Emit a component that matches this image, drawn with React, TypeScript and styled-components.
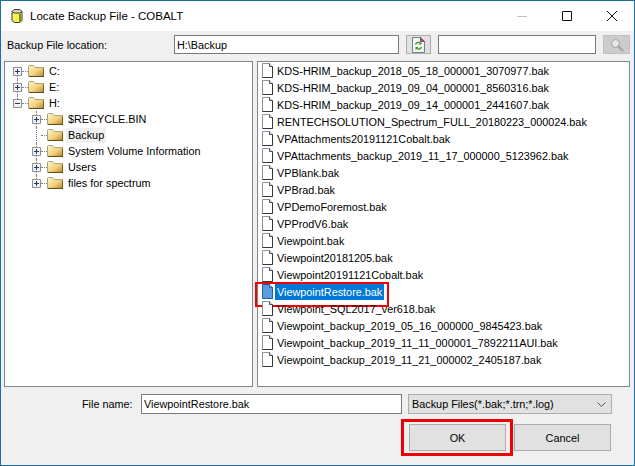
import styled, { createGlobalStyle } from 'styled-components';

const GlobalStyle = createGlobalStyle`
  html, body {
    margin: 0;
    padding: 0;
    background: #f0f0f0;
  }
  * {
    box-sizing: border-box;
  }
`;

type Line = 'down' | 'through' | 'up';

type TreeItem = {
  label: string;
  depth: number;
  box?: 'plus' | 'minus';
  line: Line;
  current?: boolean;
};

const treeItems: TreeItem[] = [
  { label: 'C:', depth: 0, box: 'plus', line: 'down' },
  { label: 'E:', depth: 0, box: 'plus', line: 'through' },
  { label: 'H:', depth: 0, box: 'minus', line: 'up' },
  { label: '$RECYCLE.BIN', depth: 1, box: 'plus', line: 'through' },
  { label: 'Backup', depth: 1, line: 'through', current: true },
  { label: 'System Volume Information', depth: 1, box: 'plus', line: 'through' },
  { label: 'Users', depth: 1, box: 'plus', line: 'through' },
  { label: 'files for spectrum', depth: 1, box: 'plus', line: 'up' },
];

const files = [
  'KDS-HRIM_backup_2018_05_18_000001_3070977.bak',
  'KDS-HRIM_backup_2019_09_04_000001_8560316.bak',
  'KDS-HRIM_backup_2019_09_14_000001_2441607.bak',
  'RENTECHSOLUTION_Spectrum_FULL_20180223_000024.bak',
  'VPAttachments20191121Cobalt.bak',
  'VPAttachments_backup_2019_11_17_000000_5123962.bak',
  'VPBlank.bak',
  'VPBrad.bak',
  'VPDemoForemost.bak',
  'VPProdV6.bak',
  'Viewpoint.bak',
  'Viewpoint20181205.bak',
  'Viewpoint20191121Cobalt.bak',
  'ViewpointRestore.bak',
  'Viewpoint_SQL2017_ver618.bak',
  'Viewpoint_backup_2019_05_16_000000_9845423.bak',
  'Viewpoint_backup_2019_11_11_000001_7892211AUI.bak',
  'Viewpoint_backup_2019_11_21_000002_2405187.bak',
];

const DatabaseIcon = () => (
  <svg width="12" height="14" viewBox="0 0 12 14">
    <defs>
      <pattern id="dbDots" width="2" height="2" patternUnits="userSpaceOnUse">
        <rect width="2" height="2" fill="#f4ee3c" />
        <rect width="1" height="1" fill="#fffbb0" />
      </pattern>
    </defs>
    <path d="M1 2.5v9l2.5 2h5l2.5-2v-9z" fill="url(#dbDots)" stroke="#3a3a2a" />
    <path d="M1 2.5l2-2h6l2 2-2 1.5H3z" fill="#d8d8c0" stroke="#3a3a2a" />
    <path d="M9 4.5v8.5" stroke="#8f8a1e" strokeWidth="2" />
  </svg>
);

const FolderIcon = () => (
  <svg width="16" height="12" viewBox="0 0 16 12">
    <defs>
      <linearGradient id="folderFill" x1="0" y1="0" x2="1" y2="1">
        <stop offset="0" stopColor="#fff6d2" />
        <stop offset="0.55" stopColor="#f3d27a" />
        <stop offset="1" stopColor="#b5852a" />
      </linearGradient>
    </defs>
    <path d="M.5 1l1-.5h4l1.5 2h8.5v9H.5z" fill="url(#folderFill)" stroke="#b0a27c" />
    <path d="M1 11.5h15" stroke="#5b4a1e" />
    <path d="M15.5 3v8" stroke="#7a6228" />
  </svg>
);

const FileIcon = ({ selected }: { selected?: boolean }) => (
  <svg width="13" height="15" viewBox="0 0 13 15">
    <path
      d="M1.5.5h7l3 3v11h-10z"
      fill={selected ? '#5d9be0' : '#fff'}
      stroke={selected ? '#1c5fa8' : '#8d9298'}
    />
    <path d="M8.5.5v3h3" fill={selected ? '#a9cdf2' : '#e8e8e8'} stroke={selected ? '#1c5fa8' : '#4a4f55'} />
    <path d="M11.5 3.5v11h-10" fill="none" stroke={selected ? '#1c5fa8' : '#33383d'} />
  </svg>
);

const RefreshIcon = () => (
  <svg width="13" height="16" viewBox="0 0 13 16">
    <path d="M.5.5h8l4 4v11H.5z" fill="#f3f6e8" stroke="#6f7f9c" />
    <path d="M8.5.5l4 4h-4z" fill="#c0508f" stroke="#8a3f78" />
    <path d="M3.5 7.5a3 3 0 0 1 5-1.2" fill="none" stroke="#3c9a3c" strokeWidth="1.4" />
    <path d="M9.5 4.5v3h-3z" fill="#3c9a3c" />
    <path d="M9.5 10a3 3 0 0 1-5 1.2" fill="none" stroke="#3c9a3c" strokeWidth="1.4" />
    <path d="M3.5 13v-3h3z" fill="#3c9a3c" />
  </svg>
);

const SearchIcon = () => (
  <svg width="14" height="14" viewBox="0 0 14 14">
    <circle cx="5.5" cy="5.5" r="4" fill="#e6e6e6" stroke="#a3a3a3" />
    <path d="M8.5 8.5l4 4" stroke="#a3a3a3" strokeWidth="2.4" strokeLinecap="round" />
  </svg>
);

const MinimizeIcon = () => (
  <svg width="10" height="10" viewBox="0 0 10 10">
    <path d="M0 5.5h10" stroke="#c4c4c4" />
  </svg>
);

const MaximizeIcon = () => (
  <svg width="10" height="10" viewBox="0 0 10 10">
    <path d="M.5.5h9v9h-9z" fill="none" stroke="#111" />
  </svg>
);

const CloseIcon = () => (
  <svg width="10" height="10" viewBox="0 0 10 10">
    <path d="M0 0l10 10M10 0L0 10" stroke="#111" />
  </svg>
);

const ChevronIcon = () => (
  <svg width="9" height="5" viewBox="0 0 9 5">
    <path d="M.5.5l4 4 4-4" fill="none" stroke="#555" />
  </svg>
);

const Expander = ({ kind }: { kind: 'plus' | 'minus' }) => (
  <ExpanderSvg width="9" height="9" viewBox="0 0 9 9">
    <path d="M.5.5h8v8h-8z" fill="#f2f2f5" stroke="#8e8f8f" />
    <path d="M2 4.5h5" stroke="#1f3a6e" />
    {kind === 'plus' && <path d="M4.5 2v5" stroke="#1f3a6e" />}
  </ExpanderSvg>
);

export default function App() {
  return (
    <>
      <GlobalStyle />
      <Window>
        <TitleBar>
          <DatabaseIcon />
          <Title>Locate Backup File - COBALT</Title>
          <WindowButtons>
            <WindowButton><MinimizeIcon /></WindowButton>
            <WindowButton><MaximizeIcon /></WindowButton>
            <WindowButton><CloseIcon /></WindowButton>
          </WindowButtons>
        </TitleBar>

        <Body>
          <LocationRow>
            <LocationLabel>Backup File location:</LocationLabel>
            <TextField $width="225px" value="H:\Backup" />
            <IconButton $width="25px"><RefreshIcon /></IconButton>
            <TextField $width="158px" value="" />
            <IconButton $width="27px" $disabled><SearchIcon /></IconButton>
          </LocationRow>

          <Panes>
            <TreePane>
              {treeItems.map((item) => (
                <TreeRow key={item.label} $depth={item.depth}>
                  <ExpanderSlot $line={item.line}>
                    {item.box && <Expander kind={item.box} />}
                  </ExpanderSlot>
                  <Connector />
                  <FolderIcon />
                  <TreeLabel $current={item.current}>{item.label}</TreeLabel>
                </TreeRow>
              ))}
            </TreePane>
            <FilePane>
              {files.map((name) => {
                const selected = name === 'ViewpointRestore.bak';
                return (
                  <FileRow key={name} $selected={selected}>
                    <FileIcon selected={selected} />
                    <FileName $selected={selected}>{name}</FileName>
                  </FileRow>
                );
              })}
            </FilePane>
          </Panes>

          <NameRow>
            <NameLabel>File name:</NameLabel>
            <TextField $width="261px" $height="20px" value="ViewpointRestore.bak" />
            <Combo>
              Backup Files(*.bak;*.trn;*.log)
              <ChevronIcon />
            </Combo>
          </NameRow>

          <ButtonRow>
            <Marked>
              <PushButton>OK</PushButton>
            </Marked>
            <PushButton>Cancel</PushButton>
          </ButtonRow>
        </Body>
      </Window>
    </>
  );
}

const Window = styled.div`
  width: 635px;
  height: 466px;
  display: flex;
  flex-direction: column;
  background: #f0f0f0;
  border: 1px solid #1c6ea4;
  font-family: 'Liberation Sans', Arial, sans-serif;
  font-size: 10.85px;
  color: #000;
  overflow: hidden;
`;

const TitleBar = styled.div`
  height: 30px;
  flex: none;
  display: flex;
  align-items: center;
  padding-left: 10px;
  background: #fff;
`;

const Title = styled.div`
  margin-left: 7px;
  font-size: 11.5px;
  color: #000;
`;

const WindowButtons = styled.div`
  margin-left: auto;
  display: flex;
`;

const WindowButton = styled.div`
  width: 45px;
  height: 30px;
  display: flex;
  align-items: center;
  justify-content: center;
`;

const Body = styled.div`
  flex: 1;
  display: flex;
  flex-direction: column;
  padding: 4px 4px 0 3px;
`;

const LocationRow = styled.div`
  height: 20px;
  display: flex;
  align-items: flex-start;
  gap: 7px;
`;

const LocationLabel = styled.label`
  width: 163px;
  padding: 4px 0 0 3px;
`;

const TextField = styled.input.attrs({ readOnly: true })<{ $width: string; $height?: string }>`
  width: ${(p) => p.$width};
  height: ${(p) => p.$height ?? '19px'};
  padding: 0 2px;
  border: 1px solid #7a7a7a;
  background: #fff;
  font: inherit;
  color: #000;
  outline: none;
`;

const IconButton = styled.div<{ $width: string; $disabled?: boolean }>`
  width: ${(p) => p.$width};
  height: 19px;
  display: flex;
  align-items: center;
  justify-content: center;
  background: ${(p) => (p.$disabled ? '#cccccc' : '#e1e1e1')};
  border: 1px solid ${(p) => (p.$disabled ? '#bfbfbf' : '#adadad')};
`;

const Panes = styled.div`
  margin-top: 6px;
  height: 326px;
  display: flex;
  gap: 4px;
`;

const Pane = styled.div`
  height: 100%;
  background: #fff;
  border: 1px solid #828790;
`;

const TreePane = styled(Pane)`
  width: 249px;
  padding: 1px 0 0 8px;
`;

const FilePane = styled(Pane)`
  width: 373px;
  padding: 0 0 0 3px;
`;

const TreeRow = styled.div<{ $depth: number }>`
  height: 16px;
  display: flex;
  align-items: center;
  padding-left: ${(p) => p.$depth * 19}px;
`;

const ExpanderSlot = styled.div<{ $line: Line }>`
  position: relative;
  width: 9px;
  height: 16px;
  flex: none;
  display: flex;
  align-items: center;

  &::before {
    content: '';
    position: absolute;
    left: 4px;
    top: ${(p) => (p.$line === 'down' ? '8px' : '0')};
    bottom: ${(p) => (p.$line === 'up' ? '8px' : '0')};
    border-left: 1px dotted #808080;
  }
`;

const ExpanderSvg = styled.svg`
  position: relative;
`;

const Connector = styled.div`
  width: 6px;
  height: 1px;
  flex: none;
  border-top: 1px dotted #808080;
`;

const TreeLabel = styled.span<{ $current?: boolean }>`
  margin-left: 3px;
  padding: 0 2px;
  line-height: 15px;
  white-space: nowrap;
  background: ${(p) => (p.$current ? '#f0f0f0' : 'transparent')};
`;

const FileRow = styled.div<{ $selected?: boolean }>`
  position: relative;
  height: 17px;
  display: flex;
  align-items: center;
  gap: 1px;

  ${(p) =>
    p.$selected &&
    `
    &::after {
      content: '';
      position: absolute;
      left: -6px;
      top: -1px;
      width: 130px;
      height: 21px;
      border: 2px solid #f00000;
    }
  `}
`;

const FileName = styled.span<{ $selected?: boolean }>`
  white-space: nowrap;
  padding: 1px 2px 0;
  line-height: 16px;
  background: ${(p) => (p.$selected ? '#0078d7' : 'transparent')};
  color: ${(p) => (p.$selected ? '#fff' : '#000')};
`;

const NameRow = styled.div`
  margin-top: 7px;
  height: 20px;
  display: flex;
  align-items: center;
`;

const NameLabel = styled.label`
  width: 137px;
  padding-left: 78px;
  white-space: nowrap;
`;

const Combo = styled.div`
  margin-left: 6px;
  width: 204px;
  height: 20px;
  padding: 0 5px 0 3px;
  display: flex;
  align-items: center;
  justify-content: space-between;
  background: #e1e1e1;
  border: 1px solid #adadad;
`;

const ButtonRow = styled.div`
  margin-top: 10px;
  display: flex;
  align-items: center;
  justify-content: flex-end;
  gap: 8px;
  padding-right: 19px;
`;

const PushButton = styled.div`
  width: 97px;
  height: 27px;
  display: flex;
  align-items: center;
  justify-content: center;
  background: #e1e1e1;
  border: 1px solid #adadad;
`;

const Marked = styled.div`
  position: relative;

  &::after {
    content: '';
    position: absolute;
    inset: -5px -7px -5px -8px;
    border: 3px solid #f00000;
  }
`;
